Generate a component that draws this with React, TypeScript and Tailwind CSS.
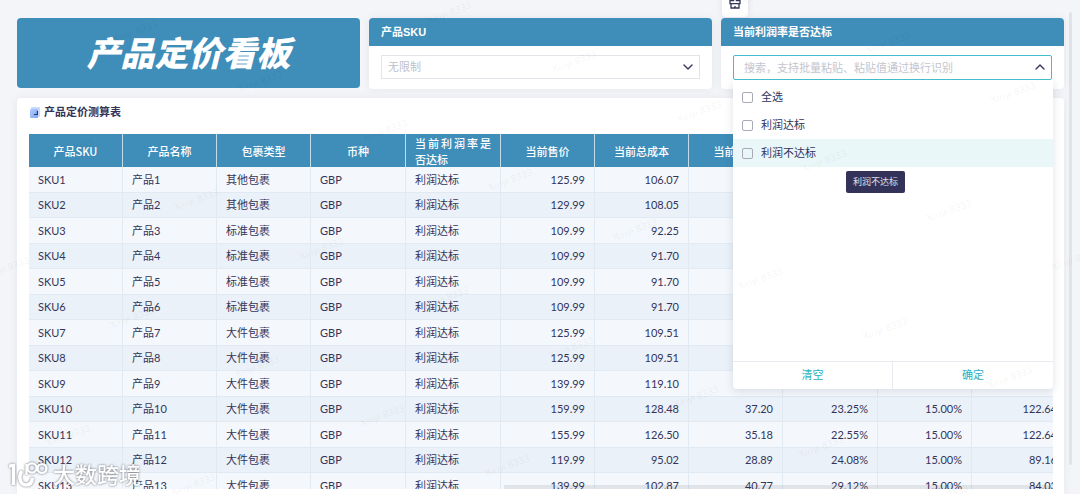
import { useState } from "react";
import type { ReactNode } from "react";
import { ChevronDown, ChevronUp } from "lucide-react";

interface Row {
  sku: string;
  name: string;
  pack: string;
  price: string;
  cost: string;
  profit?: string;
  rate?: string;
  target?: string;
  targetPrice?: string;
}

const rows: Row[] = [
  { sku: "SKU1", name: "产品1", pack: "其他包裹", price: "125.99", cost: "106.07" },
  { sku: "SKU2", name: "产品2", pack: "其他包裹", price: "129.99", cost: "108.05" },
  { sku: "SKU3", name: "产品3", pack: "标准包裹", price: "109.99", cost: "92.25" },
  { sku: "SKU4", name: "产品4", pack: "标准包裹", price: "109.99", cost: "91.70" },
  { sku: "SKU5", name: "产品5", pack: "标准包裹", price: "109.99", cost: "91.70" },
  { sku: "SKU6", name: "产品6", pack: "标准包裹", price: "109.99", cost: "91.70" },
  { sku: "SKU7", name: "产品7", pack: "大件包裹", price: "125.99", cost: "109.51" },
  { sku: "SKU8", name: "产品8", pack: "大件包裹", price: "125.99", cost: "109.51" },
  { sku: "SKU9", name: "产品9", pack: "大件包裹", price: "139.99", cost: "119.10" },
  { sku: "SKU10", name: "产品10", pack: "大件包裹", price: "159.99", cost: "128.48", profit: "37.20", rate: "23.25%", target: "15.00%", targetPrice: "122.64" },
  { sku: "SKU11", name: "产品11", pack: "大件包裹", price: "155.99", cost: "126.50", profit: "35.18", rate: "22.55%", target: "15.00%", targetPrice: "122.64" },
  { sku: "SKU12", name: "产品12", pack: "大件包裹", price: "119.99", cost: "95.02", profit: "28.89", rate: "24.08%", target: "15.00%", targetPrice: "89.16" },
  { sku: "SKU13", name: "产品13", pack: "大件包裹", price: "139.99", cost: "102.87", profit: "40.77", rate: "29.12%", target: "15.00%", targetPrice: "84.03" },
];

const columns = [
  { title: "产品SKU", width: "w-[94px]" },
  { title: "产品名称", width: "w-[94px]" },
  { title: "包裹类型", width: "w-[94px]" },
  { title: "币种", width: "w-[95px]" },
  { title: "当前利润率是否达标", width: "w-[95px]" },
  { title: "当前售价", width: "w-[94px]" },
  { title: "当前总成本", width: "w-[94px]" },
  { title: "当前利润", width: "w-[94px]" },
  { title: "", width: "w-[95px]" },
  { title: "", width: "w-[94px]" },
  { title: "", width: "w-[95px]" },
];

const options = ["全选", "利润达标", "利润不达标"];

// watermark grid: every step moves along two slanted axes
const marks: { x: number; y: number }[] = [];
for (let i = -8; i <= 8; i++) {
  for (let j = -4; j <= 6; j++) {
    const x = Math.round(449 + 125 * i - 64 * j);
    const y = Math.round(13 + 49.4 * i + 118 * j);
    if (x > -30 && x < 1110 && y > -10 && y < 510) marks.push({ x, y });
  }
}

function Watermark() {
  return (
    <div className="pointer-events-none absolute inset-0 z-30 overflow-hidden" aria-hidden="true">
      {marks.map((m) => (
        <span
          key={`${m.x}-${m.y}`}
          className="absolute -translate-x-1/2 -translate-y-1/2 -rotate-[20deg] whitespace-nowrap text-[10px] leading-none text-black/6"
          style={{ left: m.x, top: m.y }}
        >
          Xinyi 8333
        </span>
      ))}
    </div>
  );
}

function BrushIcon() {
  return (
    <svg width="12" height="13" viewBox="0 0 12 13" fill="none" stroke="#34345a" strokeWidth="1.3">
      <path d="M4.6 4.6V1h2.8v3.6H11v3H1v-3z" />
      <path d="M2 7.6V12h8V7.6M6 10V12" />
    </svg>
  );
}

function TableIcon() {
  return (
    <svg width="10" height="11" viewBox="0 0 10 11">
      <defs>
        <linearGradient id="cube" x1="0" y1="0" x2="1" y2="1">
          <stop offset="0" stopColor="#b4cdfb" />
          <stop offset="1" stopColor="#7ea3f3" />
        </linearGradient>
      </defs>
      <rect x="1" y="0" width="9" height="10" rx="1" fill="#c9d9fb" />
      <rect x="0" y="2" width="8" height="9" rx="1" fill="url(#cube)" />
      <path d="M8 4V8H4V7H6.800V4z" fill="#26387c" />
    </svg>
  );
}

function BrandMark() {
  return (
    <div className="absolute bottom-1 left-[9px] z-40 flex items-center gap-[5px] drop-shadow-[0_0_1px_rgba(90,90,100,0.9)]">
      <svg width="39" height="28" viewBox="0 0 39 28" fill="none" stroke="#fff">
        <path d="M0 4.500L3 3.500H4.500V23" strokeWidth="3.400" />
        <path d="M13 9C9 14 11 23 17 23C21 23 23 20 23.500 16" strokeWidth="3.600" />
        <path d="M17.500 13V2" strokeWidth="2.400" />
        <circle cx="23" cy="6" r="4.600" strokeWidth="2.400" />
        <circle cx="33" cy="6.500" r="4.400" strokeWidth="2.400" />
      </svg>
      <span className="text-[22px] font-medium leading-7 text-white">大数跨境</span>
    </div>
  );
}

function FilterCard({ title, htmlFor, children }: { title: string; htmlFor: string; children: ReactNode }) {
  return (
    <section className="relative rounded bg-white shadow-[0_0_8px_rgba(60,70,100,0.08)]">
      <label
        htmlFor={htmlFor}
        className="block h-7 rounded-t bg-[#3f8db9] px-3 text-[11px] font-bold leading-7 text-white"
      >
        {title}
      </label>
      <div className="relative px-3 py-[9px]">{children}</div>
    </section>
  );
}

export default function App() {
  const [search, setSearch] = useState("");
  const [checked, setChecked] = useState<string[]>([]);

  const toggle = (option: string) => {
    setChecked((prev) => (prev.includes(option) ? prev.filter((o) => o !== option) : [...prev, option]));
  };

  const num = "border-r border-b border-[#e1eaf2] px-[9px] text-right";
  const txt = "border-r border-b border-[#e1eaf2] px-[9px] text-left";

  return (
    <main className="relative flex h-screen flex-col gap-[9px] overflow-hidden bg-[#f4f5f8] pt-[18px] pr-4 pl-[17px] [font-family:'Liberation_Sans','Noto_Sans_CJK_SC',sans-serif] text-[11px] text-[#34345a]">
      <div className="grid grid-cols-3 gap-[9px]">
        <h1 className="flex h-[70px] items-center justify-center rounded bg-[#3f8db9] pt-0.5 text-[34px] font-black italic leading-none text-white">
          产品定价看板
        </h1>

        <FilterCard title="产品SKU" htmlFor="sku">
          <div className="relative">
            <select
              id="sku"
              className="block h-6 w-full appearance-none border border-[#e3e4ea] bg-white px-1.5 text-[11px] text-[#bfc0ca] outline-none"
            >
              <option>无限制</option>
            </select>
            <ChevronDown className="pointer-events-none absolute top-1 right-1 size-4 text-[#34345a]" strokeWidth={2} />
          </div>
        </FilterCard>

        <div className="relative z-20">
          <button
            aria-label="清除"
            className="absolute -top-6 left-px flex h-[23px] w-[26px] items-end justify-center rounded bg-white pb-2 shadow-[0_0_6px_rgba(60,70,100,0.12)]"
          >
            <BrushIcon />
          </button>
          <FilterCard title="当前利润率是否达标" htmlFor="reached">
            <div className="relative">
              <div className="relative z-10 rounded-xs border border-[#45bccb] bg-white">
                <input
                  id="reached"
                  type="text"
                  value={search}
                  onChange={(e) => setSearch(e.target.value)}
                  placeholder="搜索，支持批量粘贴、粘贴值通过换行识别"
                  className="block h-[23px] w-full px-2.5 text-[11px] outline-none placeholder:text-[#c4c5ce]"
                />
              </div>
              <ChevronUp className="pointer-events-none absolute top-1 right-1 z-10 size-4 text-[#34345a]" strokeWidth={2} />

              <div className="absolute -right-px left-0 top-full rounded-b bg-white pt-[3px] shadow-[0_2px_8px_rgba(40,50,80,0.14)]">
                <ul className="h-[278px]">
                  {options.map((option, i) => (
                    <li key={option} className={i === 2 ? "relative bg-[#eaf7f9]" : "relative"}>
                      <label className="flex h-7 items-center gap-2 pl-[9px]">
                        <input
                          type="checkbox"
                          checked={checked.includes(option)}
                          onChange={() => toggle(option)}
                          className="size-[11px] appearance-none rounded-xs border border-[#a9aab8] checked:bg-[#2ab0bd]"
                        />
                        {option}
                      </label>
                      {i === 2 && (
                        <div
                          role="tooltip"
                          className="absolute top-8 left-[113px] rounded-xs bg-[#33335a] px-[7px] text-[9px] leading-[22px] text-white/85"
                        >
                          {option}
                        </div>
                      )}
                    </li>
                  ))}
                </ul>
                <div className="grid h-7 grid-cols-2 border-t border-[#e9eaef] text-[#2ab0bd]">
                  <button onClick={() => setChecked([])} className="border-r border-[#e9eaef]">
                    清空
                  </button>
                  <button>确定</button>
                </div>
              </div>
            </div>
          </FilterCard>
        </div>
      </div>

      <section className="flex min-h-0 flex-1 flex-col rounded-t bg-white pr-[11px] pb-[5px] pl-3 shadow-[0_0_8px_rgba(60,70,100,0.08)]">
        <h2 className="flex h-9 items-start gap-1 pt-[5px] pl-px text-[11px] font-bold leading-[18px]">
          <span className="pt-1">
            <TableIcon />
          </span>
          产品定价测算表
        </h2>
        <div className="relative min-h-0 flex-1 overflow-hidden">
          <table className="w-[1038px] table-fixed border-separate border-spacing-0">
            <thead>
              <tr className="h-[33px] bg-[#3f8db9] text-white [font-family:'Noto_Sans_CJK_SC',sans-serif]">
                {columns.map((col, i) => (
                  <th
                    key={i}
                    className={`${col.width} border-r border-[#c3dcea] px-[9px] py-0 font-medium leading-4 ${
                      i === 4 ? "text-justify" : "text-center"
                    }`}
                  >
                    {col.title}
                  </th>
                ))}
              </tr>
            </thead>
            <tbody className="[font-family:Lato,'Noto_Sans_CJK_SC',sans-serif] leading-4">
              {rows.map((row) => (
                <tr key={row.sku} className="odd:h-[26px] odd:bg-[#f4f8fc] even:h-[25px] even:bg-[#eaf1f8]">
                  <td className={txt}>{row.sku}</td>
                  <td className={txt}>{row.name}</td>
                  <td className={txt}>{row.pack}</td>
                  <td className={txt}>GBP</td>
                  <td className={txt}>利润达标</td>
                  <td className={num}>{row.price}</td>
                  <td className={num}>{row.cost}</td>
                  <td className={num}>{row.profit}</td>
                  <td className={num}>{row.rate}</td>
                  <td className={num}>{row.target}</td>
                  <td className={num}>{row.targetPrice}</td>
                </tr>
              ))}
            </tbody>
          </table>
          <div className="absolute right-0 bottom-0 h-1 w-[549px] bg-black/8" />
        </div>
      </section>

      <div className="absolute top-3 right-2 bottom-[29px] w-[3px] rounded-full bg-[#e1e3e8]" />
      <Watermark />
      <BrandMark />
    </main>
  );
}
